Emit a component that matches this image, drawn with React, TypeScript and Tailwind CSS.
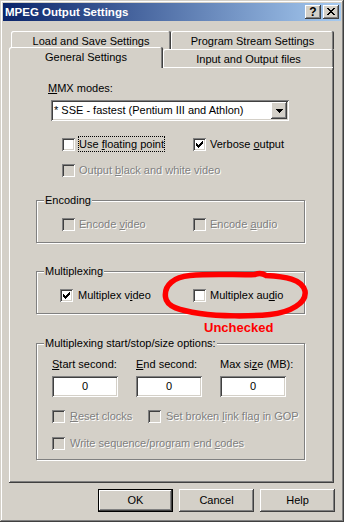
import type { ReactNode } from 'react'

const raised =
  'shadow-[inset_-1px_-1px_#404040,inset_1px_1px_#ffffff,inset_-2px_-2px_#808080,inset_2px_2px_#d4d0c8]'
const sunken =
  'shadow-[inset_1px_1px_#808080,inset_-1px_-1px_#ffffff,inset_2px_2px_#404040,inset_-2px_-2px_#d4d0c8]'
const etched = 'border border-[#808080] shadow-[inset_1px_1px_#ffffff,1px_1px_#ffffff]'
const dim = 'text-[#808080] [text-shadow:1px_1px_0_#ffffff]'

function CheckBox({ checked = false, disabled = false }: { checked?: boolean; disabled?: boolean }) {
  return (
    <span
      className={`flex h-[13px] w-[13px] shrink-0 p-[3px] ${disabled ? 'bg-[#d4d0c8]' : 'bg-white'} ${sunken}`}
    >
      {checked && (
        <svg width="7" height="7" viewBox="0 0 7 7" shapeRendering="crispEdges">
          <path
            d="M0 2h1v3H0zM1 3h1v3H1zM2 4h1v3H2zM3 3h1v3H3zM4 2h1v3H4zM5 1h1v3H5zM6 0h1v3H6z"
            fill="#000"
          />
        </svg>
      )}
    </span>
  )
}

function Option({
  checked,
  disabled,
  gap = 'ml-[4px]',
  children,
}: {
  checked?: boolean
  disabled?: boolean
  gap?: string
  children: ReactNode
}) {
  return (
    <div className="flex items-center">
      <CheckBox checked={checked} disabled={disabled} />
      <span className={`${gap} whitespace-nowrap ${disabled ? dim : ''}`}>{children}</span>
    </div>
  )
}

function Group({ title, className, children }: { title: string; className: string; children: ReactNode }) {
  return (
    <div className={`ml-[27px] w-[269px] ${etched} ${className}`}>
      <div className="-mt-[7px] ml-[7px] w-fit bg-[#d4d0c8] px-[1px] whitespace-nowrap">{title}</div>
      {children}
    </div>
  )
}

function Tab({ className, children }: { className: string; children: ReactNode }) {
  return (
    <div
      className={`flex items-center justify-center rounded-t-[2px] bg-[#d4d0c8] whitespace-nowrap shadow-[inset_-1px_0_#404040,inset_1px_1px_#ffffff,inset_-2px_0_#808080] ${className}`}
    >
      {children}
    </div>
  )
}

function PushButton({ label, isDefault = false }: { label: string; isDefault?: boolean }) {
  return (
    <div
      className={`flex h-[23px] w-[75px] items-center justify-center bg-[#d4d0c8] ${raised} ${isDefault ? 'border border-black' : ''}`}
    >
      {label}
    </div>
  )
}

function NumberField() {
  return <div className={`flex h-[21px] w-[66px] items-center justify-center bg-white ${sunken}`}>0</div>
}

export default function App() {
  return (
    <div className="relative h-[522px] w-[344px] overflow-hidden bg-[#d4d0c8] p-[3px] font-['Liberation_Sans',Arial,sans-serif] text-[11px] leading-[13px] text-black shadow-[inset_-1px_-1px_#404040,inset_1px_1px_#d4d0c8,inset_-2px_-2px_#808080,inset_2px_2px_#ffffff]">
      {/* Title bar */}
      <div className="flex h-[18px] items-center bg-[linear-gradient(to_right,#0a246a,#a6caf0)] px-[2px]">
        <span className="flex-1 text-[11.5px] font-bold text-white">MPEG Output Settings</span>
        <div className={`flex h-[14px] w-[16px] items-center justify-center bg-[#d4d0c8] ${raised}`}>
          <span className="pb-[1px] text-[12px] leading-none font-bold">?</span>
        </div>
        <div className={`ml-[2px] flex h-[14px] w-[16px] items-center justify-center bg-[#d4d0c8] ${raised}`}>
          <svg width="8" height="7" viewBox="0 0 8 7" shapeRendering="crispEdges" className="-mt-[1px]">
            <path
              d="M0 0h2v1H0zM6 0h2v1H6zM1 1h2v1H1zM5 1h2v1H5zM2 2h4v1H2zM3 3h2v1H3zM2 4h4v1H2zM1 5h2v1H1zM5 5h2v1H5zM0 6h2v1H0zM6 6h2v1H6z"
              fill="#000"
            />
          </svg>
        </div>
      </div>

      <div className="mt-[10px] ml-[6px] w-[325px]">
        {/* Tabs */}
        <div className="flex h-[18px] pl-[2px]">
          <Tab className="h-[18px] w-[160px] pt-[2px]">Load and Save Settings</Tab>
          <Tab className="h-[18px] w-[163px] pt-[2px]">Program Stream Settings</Tab>
        </div>
        <div className="relative z-10 -mt-[2px] flex h-[21px] items-start">
          <Tab className="h-[21px] w-[154px]">General Settings</Tab>
          <Tab className="mt-[2px] h-[18px] w-[171px] pt-[2px]">Input and Output files</Tab>
        </div>

        {/* Panel */}
        <div className="-mt-[1px] flex h-[416px] flex-col shadow-[inset_-1px_-1px_#404040,inset_1px_1px_#ffffff,inset_-2px_-2px_#808080]">
          <div className="mt-[15px] ml-[39px]">
            <u>M</u>MX modes:
          </div>
          <div className={`mt-[5px] ml-[42px] flex h-[21px] w-[238px] items-center bg-white pl-[3px] pr-[2px] ${sunken}`}>
            <span className="flex-1 whitespace-nowrap">* SSE - fastest (Pentium III and Athlon)</span>
            <div className={`flex h-[17px] w-[16px] items-center justify-center bg-[#d4d0c8] ${raised}`}>
              <svg width="7" height="4" viewBox="0 0 7 4" shapeRendering="crispEdges">
                <path d="M0 0h7v1H0zM1 1h5v1H1zM2 2h3v1H2zM3 3h1v1H3z" fill="#000" />
              </svg>
            </div>
          </div>

          <div className="mt-[15px] ml-[53px] flex h-[16px] items-center">
            <div className="flex w-[131px] items-center">
              <CheckBox />
              <span className="ml-[3px] h-[16px] border border-dotted border-black leading-[14px] whitespace-nowrap">
                Use <u>f</u>loating point
              </span>
            </div>
            <Option checked>
              Verbose <u>o</u>utput
            </Option>
          </div>
          <div className="mt-[12px] ml-[53px]">
            <Option disabled>
              Output <u>b</u>lack and white video
            </Option>
          </div>

          <Group title="Encoding" className="mt-[23px] h-[43px]">
            <div className="mt-[11px] ml-[25px] flex">
              <div className="w-[131px]">
                <Option disabled>
                  Encode <u>v</u>ideo
                </Option>
              </div>
              <Option disabled>
                Encode <u>a</u>udio
              </Option>
            </div>
          </Group>

          <Group title="Multiplexing" className="mt-[28px] h-[43px]">
            <div className="mt-[11px] ml-[23px] flex">
              <div className="w-[133px]">
                <Option checked gap="ml-[5px]">
                  Multiplex v<u>i</u>deo
                </Option>
              </div>
              <Option>
                Multiplex au<u>d</u>io
              </Option>
            </div>
          </Group>

          <Group title="Multiplexing start/stop/size options:" className="mt-[29px] h-[117px]">
            <div className="mt-[8px] ml-[15px] grid grid-cols-[84px_84px_84px] whitespace-nowrap">
              <span>
                <u>S</u>tart second:
              </span>
              <span>
                <u>E</u>nd second:
              </span>
              <span>
                Max si<u>z</u>e (MB):
              </span>
            </div>
            <div className="mt-[5px] ml-[15px] grid grid-cols-[84px_84px_84px]">
              <NumberField />
              <NumberField />
              <NumberField />
            </div>
            <div className="mt-[13px] ml-[15px] flex">
              <div className="w-[96px]">
                <Option disabled gap="ml-[5px]">
                  <u>R</u>eset clocks
                </Option>
              </div>
              <Option disabled gap="ml-[5px]">
                Set broken <u>l</u>ink flag in GOP
              </Option>
            </div>
            <div className="mt-[14px] ml-[15px]">
              <Option disabled gap="ml-[5px]">
                Write sequence/program end <u>c</u>odes
              </Option>
            </div>
          </Group>
        </div>

        {/* Dialog buttons */}
        <div className="mt-[6px] -mr-[1px] flex justify-end gap-[6px]">
          <PushButton label="OK" isDefault />
          <PushButton label="Cancel" />
          <PushButton label="Help" />
        </div>
      </div>

      {/* Red annotation drawn over the screenshot */}
      <svg
        className="absolute top-[268px] left-[160px]"
        width="150"
        height="54"
        viewBox="0 0 150 54"
        fill="none"
      >
        <path
          d="M5.5 29C4 17 14 9 30 7.5C55 5 80 7.5 95 6.5C100 4.5 103 5.5 106 7.5C125 8.5 142 11 145 23C147 35 130 44.5 110 46.5C90 48.5 60 48.5 40 45.5C20 42.5 6.5 39 5.5 29Z"
          stroke="#ff0000"
          strokeWidth="5.5"
        />
      </svg>
      <div className="absolute top-[320px] left-[204px] text-[13px] leading-[15px] font-bold text-[#ff0000]">
        Unchecked
      </div>
    </div>
  )
}
